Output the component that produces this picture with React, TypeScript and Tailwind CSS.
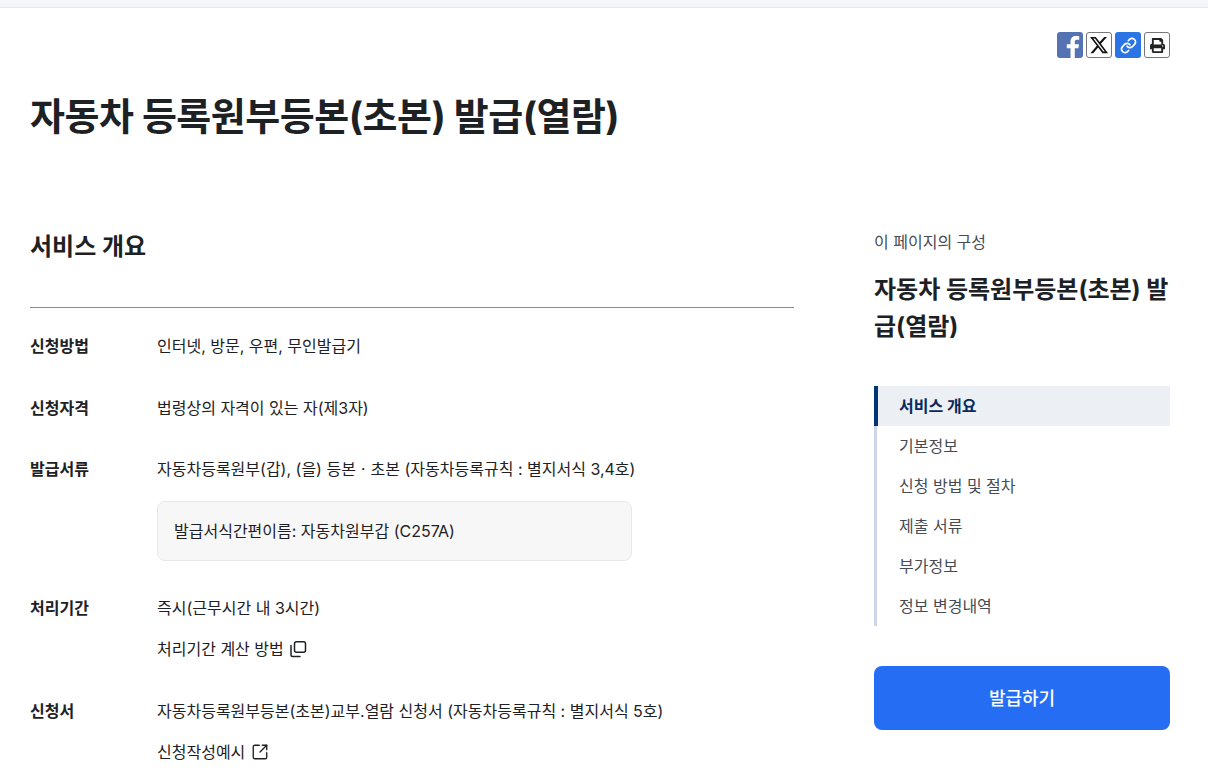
import { Link, SquareArrowOutUpRight } from 'lucide-react'
import { FaPrint } from 'react-icons/fa'
import { FaXTwitter } from 'react-icons/fa6'

const fontStack = "font-['Inter','Noto_Sans_CJK_KR',sans-serif]"

const navItems = ['기본정보', '신청 방법 및 절차', '제출 서류', '부가정보', '정보 변경내역']

function ShareButtons() {
  return (
    <div className="flex justify-end gap-[3px] h-[26px]">
      <div className="w-[26px] h-[26px] rounded-[3px] bg-[#5573b3] overflow-hidden">
        <svg viewBox="0 0 26 26" className="w-[26px] h-[26px]">
          <path d="M17.8 26v-9.800h3.600l.6-4h-4.200V9.800c0-1.200.4-2 2.100-2h2.300V4.200c-.4 0-1.700-.2-3.300-.2-3.200 0-5.400 2-5.400 5.500v2.700H9.800v4h3.700V26z" fill="#fff" />
        </svg>
      </div>
      <div className="w-[26px] h-[26px] rounded-[3px] border border-[#777] bg-white flex items-center justify-center">
        <FaXTwitter className="w-[20px] h-[20px] text-[#111]" />
      </div>
      <div className="w-[26px] h-[26px] rounded-[3px] bg-[#2b74e4] flex items-center justify-center">
        <Link className="w-[17px] h-[17px] text-white" strokeWidth={2.4} />
      </div>
      <div className="w-[26px] h-[26px] rounded-[3px] border border-[#777] bg-white flex items-center justify-center">
        <FaPrint className="w-[15px] h-[15px] text-[#222]" />
      </div>
    </div>
  )
}

function CopyIcon() {
  return (
    <svg viewBox="0 0 18 18" className="w-[18px] h-[18px]" fill="none" stroke="currentColor" strokeWidth="1.5">
      <rect x="5.500" y="1.750" width="11" height="10.500" rx="2" />
      <path d="M2 5.500v9.500c0 1 .6 1.500 1.500 1.500H11" strokeLinecap="round" />
    </svg>
  )
}

function Row({ label, children }: { label: string; children: React.ReactNode }) {
  return (
    <div className="flex">
      <div className="w-[127px] shrink-0 text-[16px] leading-[24px] font-bold text-[#1e2124]">{label}</div>
      <div className="flex-1 flex flex-col gap-[17.500px] text-[16px] leading-[24px] text-[#1e2124]">{children}</div>
    </div>
  )
}

export default function App() {
  return (
    <div className={`h-screen overflow-hidden bg-white ${fontStack}`}>
      <div className="h-[8px] bg-[#f4f5f9] border-b border-[#e6e8ee]" />
      <div className="pl-[30px] pr-[38px]">
        <div className="pt-[24px]">
          <ShareButtons />
        </div>
        <h1 className="mt-[32px] text-[38px] leading-[52px] font-bold tracking-[-0.5px] text-[#1e2124]">
          자동차 등록원부등본(초본) 발급(열람)
        </h1>
        <div className="mt-[88px] flex justify-between">
          <main className="w-[764px]">
            <h2 className="text-[24px] leading-[34px] font-bold text-[#1e2124] pb-[43px] border-b border-[#8a8a8a]">서비스 개요</h2>
            <div className="mt-[26px] flex flex-col gap-[37.500px]">
              <Row label="신청방법"><p>인터넷, 방문, 우편, 무인발급기</p></Row>
              <Row label="신청자격"><p>법령상의 자격이 있는 자(제3자)</p></Row>
              <Row label="발급서류">
                <p>자동차등록원부(갑), (을) 등본ㆍ초본 (자동차등록규칙 : 별지서식 3,4호)</p>
                <div className="mt-[2px] mb-[-2.500px] w-[475px] h-[60px] flex items-center px-[16px] rounded-[8px] border border-[#e6e8ea] bg-[#f7f7f8]">
                  발급서식간편이름: 자동차원부갑 (C257A)
                </div>
              </Row>
              <Row label="처리기간">
                <p>즉시(근무시간 내 3시간)</p>
                <p className="flex items-center gap-[5px]">처리기간 계산 방법 <CopyIcon /></p>
              </Row>
              <Row label="신청서">
                <p>자동차등록원부등본(초본)교부.열람 신청서 (자동차등록규칙 : 별지서식 5호)</p>
                <p className="flex items-center gap-[6px]">신청작성예시 <SquareArrowOutUpRight className="w-[18px] h-[18px]" strokeWidth={1.8} /></p>
              </Row>
            </div>
          </main>
          <aside className="w-[296px]">
            <p className="text-[16px] leading-[24px] text-[#464c53]">이 페이지의 구성</p>
            <p className="mt-[17px] text-[24px] leading-[37px] font-bold text-[#1e2124] break-all">자동차 등록원부등본(초본) 발급(열람)</p>
            <ul className="mt-[41px] border-l-[3px] border-[#cdd6e5]">
              <li className="-ml-[3px] h-[40px] flex items-center pl-[21px] border-l-4 border-[#003675] bg-[#eceff4] text-[16px] font-bold text-[#052b5e]">서비스 개요</li>
              {navItems.map(item => (
                <li key={item} className="h-[40px] flex items-center pl-[22px] text-[16px] text-[#464c53]">{item}</li>
              ))}
            </ul>
            <button className="mt-[40px] w-full h-[64px] rounded-[8px] bg-[#256ef4] text-white text-[18px] font-medium">발급하기</button>
          </aside>
        </div>
      </div>
    </div>
  )
}
